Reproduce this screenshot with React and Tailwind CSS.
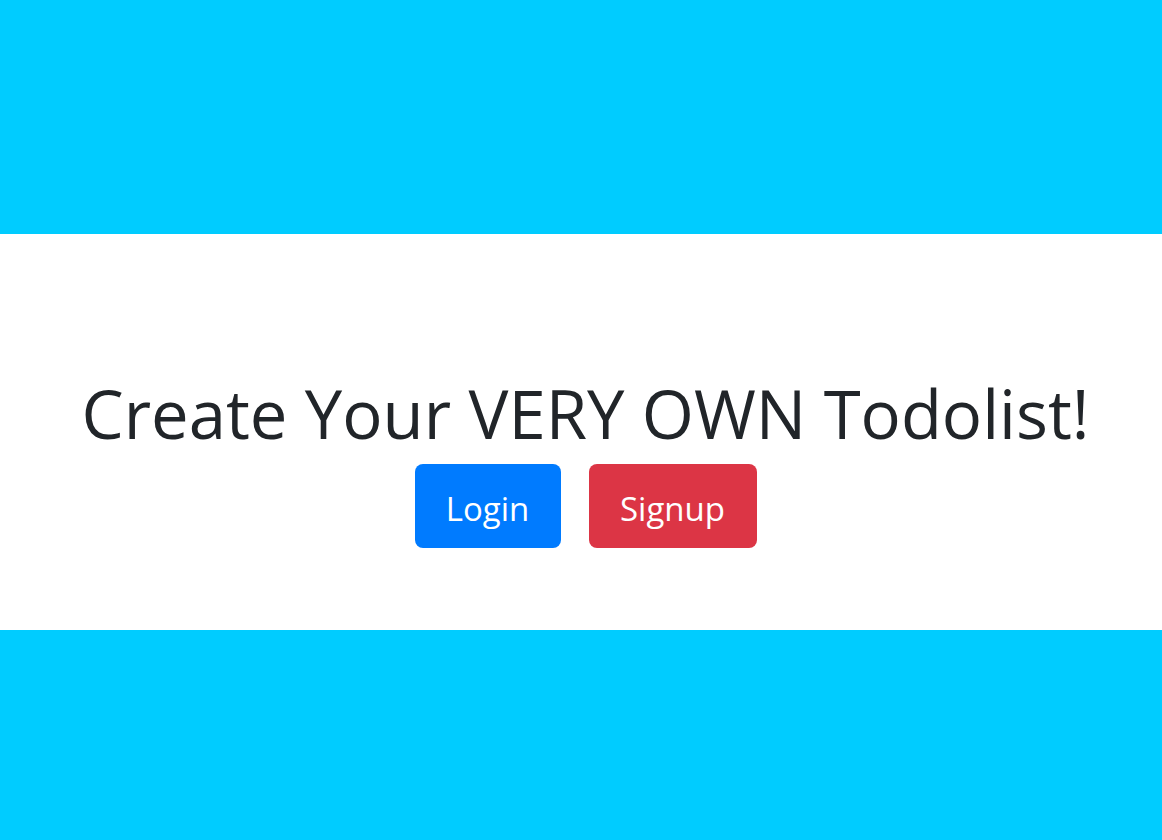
export default function App() {
  return (
    <div className="min-h-[840px] flex flex-col bg-[#00ccff]" style={{ fontFamily: '"Open Sans", "Noto Sans", sans-serif' }}>
      <div className="h-[234px]" />
      <div className="h-[396px] bg-white flex flex-col items-center pt-[139px] pl-[9px]">
        <h1 className="text-[67px] leading-[1.2] text-[#212529] font-normal">Create Your VERY OWN Todolist!</h1>
        <div className="flex gap-[28px] mt-[11px]">
          <button type="button" className="w-[146px] h-[84px] pt-[4px] rounded-lg bg-[#007bff] text-white text-[33px]">Login</button>
          <button type="button" className="w-[168px] h-[84px] pt-[4px] rounded-lg bg-[#dc3545] text-white text-[33px]">Signup</button>
        </div>
      </div>
      <div className="flex-1" />
    </div>
  )
}
